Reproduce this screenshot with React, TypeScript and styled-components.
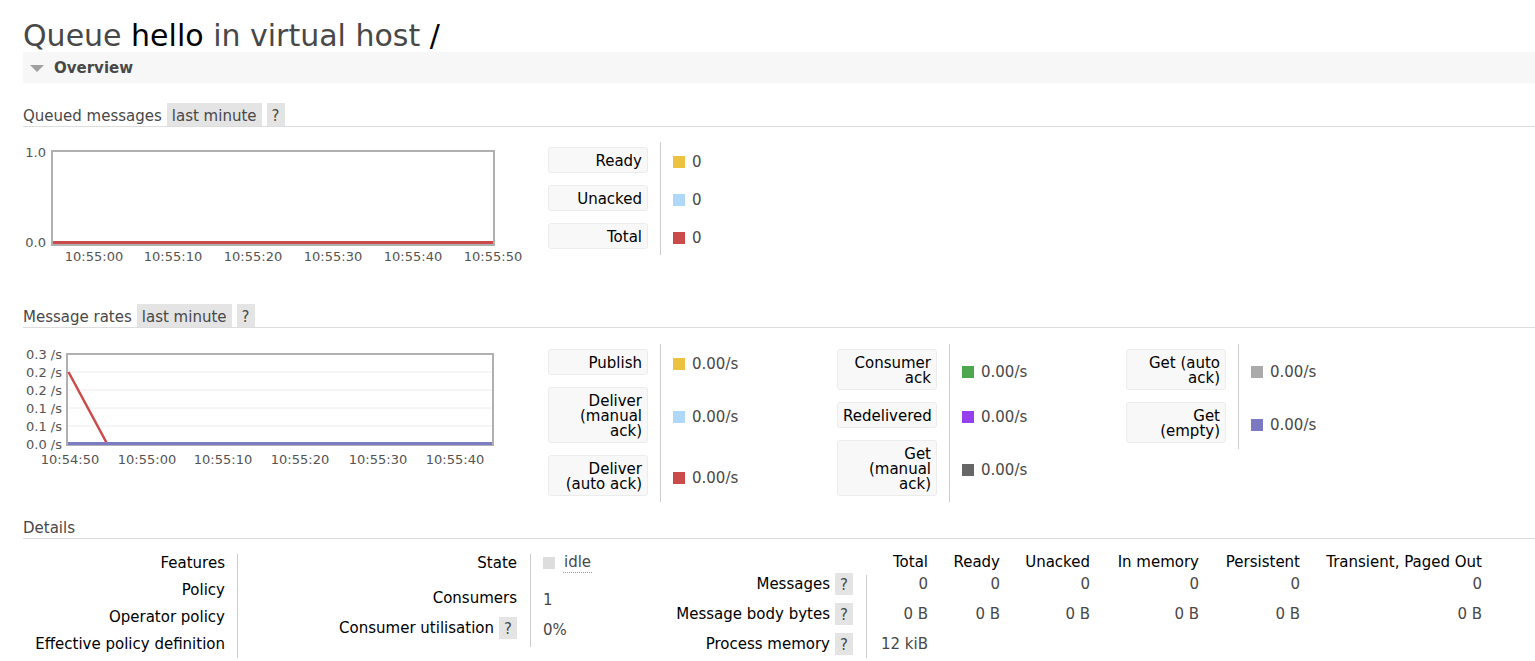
import React from "react";
import styled, { createGlobalStyle } from "styled-components";

const GlobalStyle = createGlobalStyle`
  html, body { margin: 0; padding: 0; background: #fff; }
  body {
    font-family: "DejaVu Sans", Verdana, sans-serif;
    font-size: 15px;
    color: #484848;
    overflow: hidden;
  }
  * { box-sizing: border-box; }
`;

const Page = styled.div`
  padding-left: 23px;
`;

const Title = styled.h1`
  margin: 19px 0 0;
  font-size: 30px;
  line-height: 33px;
  font-weight: normal;
  color: #484848;
  white-space: nowrap;
`;

const Name = styled.span`
  color: #000;
`;

const SectionBar = styled.div`
  display: flex;
  align-items: center;
  gap: 10px;
  height: 31px;
  padding-left: 7px;
  background: #f7f7f7;
  font-weight: bold;
  color: #484848;
`;

const Caret = styled.span`
  width: 0;
  height: 0;
  border-left: 7px solid transparent;
  border-right: 7px solid transparent;
  border-top: 7px solid #a0a0a0;
  margin-top: 1px;
`;

const Heading = styled.h2<{ $top: number }>`
  margin: ${(p) => p.$top}px 0 0;
  display: flex;
  align-items: flex-start;
  gap: 5px;
  height: 24px;
  line-height: 27px;
  border-bottom: 1px solid #ddd;
  font-size: 15px;
  font-weight: normal;
  color: #484848;
`;

const Pill = styled.span`
  display: inline-block;
  height: 23px;
  line-height: 19px;
  padding: 4px 5px 0;
  background: #e4e4e4;
  color: #484848;
`;

const Help = styled.span<{ $h: number }>`
  display: inline-block;
  width: 18px;
  height: ${(p) => p.$h}px;
  line-height: ${(p) => p.$h - 3}px;
  padding-top: 3px;
  text-align: center;
  background: #e4e4e4;
  color: #484848;
`;

const ChartRow = styled.div<{ $pad: number }>`
  display: flex;
  align-items: flex-start;
  padding-top: ${(p) => p.$pad}px;
`;

const ChartArea = styled.div`
  flex: none;
  width: 525px;
`;

const ChartSvg = styled.svg`
  display: block;
`;

const AxisText = styled.text`
  font-size: 13px;
  fill: #545454;
  font-family: "DejaVu Sans", Verdana, sans-serif;
`;

const Legend = styled.div`
  flex: none;
  display: grid;
  grid-template-columns: 100px 1px 164px;
  column-gap: 12px;
  row-gap: 12px;
  padding: 5px 0 6px;
  align-items: center;
`;

const LegendSep = styled.div<{ $n: number }>`
  grid-column: 2;
  grid-row: 1 / span ${(p) => p.$n};
  align-self: stretch;
  background: #ccc;
  margin: -5px 0 -6px;
`;

const LegendLabel = styled.div`
  grid-column: 1;
  background: #f8f8f8;
  border: 1px solid #ececec;
  border-radius: 3px;
  padding: 6px 5px 3px;
  text-align: right;
  line-height: 15px;
  color: #000;
`;

const LegendValue = styled.div`
  display: flex;
  align-items: center;
  gap: 7px;
  padding-top: 4px;
  white-space: nowrap;
`;

const Swatch = styled.span<{ $color: string }>`
  flex: none;
  width: 12px;
  height: 12px;
  background: ${(p) => p.$color};
`;

const DetailsRow = styled.div`
  display: flex;
  align-items: flex-start;
`;

const FactsGrid = styled.div<{ $cols: string; $rows: string; $pad: number }>`
  flex: none;
  display: grid;
  grid-template-columns: ${(p) => p.$cols};
  grid-template-rows: ${(p) => p.$rows};
  align-items: center;
  padding-top: ${(p) => p.$pad}px;
`;

const FactsSep = styled.div<{ $n: number; $top: number; $bottom: number }>`
  grid-column: 2;
  grid-row: 1 / span ${(p) => p.$n};
  align-self: stretch;
  background: #ccc;
  margin: ${(p) => p.$top}px 0 ${(p) => p.$bottom}px;
`;

const FactLabel = styled.div<{ $pr: number }>`
  grid-column: 1;
  display: flex;
  justify-content: flex-end;
  align-items: center;
  gap: 5px;
  padding-right: ${(p) => p.$pr}px;
  padding-top: 2px;
  color: #000;
  white-space: nowrap;
`;

const FactValue = styled.div<{ $shift?: number }>`
  grid-column: 3;
  display: flex;
  align-items: center;
  gap: 8px;
  padding-left: 12px;
  padding-top: ${(p) => p.$shift ?? 0}px;
  white-space: nowrap;
`;

const StateText = styled.span`
  border-bottom: 1px dotted #999;
  padding: 0 1px 1px;
  line-height: 17px;
`;

const NumCell = styled.div<{ $head?: boolean }>`
  text-align: right;
  white-space: nowrap;
  padding-top: 2px;
  color: ${(p) => (p.$head ? "#000" : "#484848")};
`;

type Item = { label: React.ReactNode; color: string; value: string };

function LegendGroup({ items }: { items: Item[] }) {
  return (
    <Legend>
      <LegendSep $n={items.length} />
      {items.map((it, i) => (
        <React.Fragment key={i}>
          <LegendLabel>{it.label}</LegendLabel>
          <LegendValue style={{ gridColumn: 3 }}>
            <Swatch $color={it.color} />
            {it.value}
          </LegendValue>
        </React.Fragment>
      ))}
    </Legend>
  );
}

function QueuedChart() {
  const xs = [71, 150, 230, 310, 390, 470];
  const labels = ["10:55:00", "10:55:10", "10:55:20", "10:55:30", "10:55:40", "10:55:50"];
  return (
    <ChartSvg width={525} height={128}>
      <rect x={29} y={9} width={442} height={94} fill="#fff" stroke="#b0b0b0" strokeWidth={2} />
      <line x1={30} y1={100.5} x2={470} y2={100.5} stroke="#cb4b4b" strokeWidth={3} />
      <AxisText x={23} y={15.2} textAnchor="end">1.0</AxisText>
      <AxisText x={23} y={105} textAnchor="end">0.0</AxisText>
      {xs.map((x, i) => (
        <AxisText key={i} x={x} y={119.2} textAnchor="middle">
          {labels[i]}
        </AxisText>
      ))}
    </ChartSvg>
  );
}

function RatesChart() {
  const ys = [10, 28, 46, 64, 82, 100];
  const yl = ["0.3 /s", "0.2 /s", "0.2 /s", "0.1 /s", "0.1 /s", "0.0 /s"];
  const xs = [47, 124, 200, 277, 355, 432];
  const xl = ["10:54:50", "10:55:00", "10:55:10", "10:55:20", "10:55:30", "10:55:40"];
  return (
    <ChartSvg width={525} height={130}>
      <rect x={44} y={10} width={426} height={91} fill="#fff" stroke="#b0b0b0" strokeWidth={2} />
      {[28, 46, 64, 82].map((y) => (
        <line key={y} x1={45} y1={y} x2={469} y2={y} stroke="#ececec" strokeWidth={1} />
      ))}
      <polyline points="45.5,28 84,99.5 469,99.5" fill="none" stroke="#cb4b4b" strokeWidth={2.5} />
      <line x1={45} y1={99.5} x2={469} y2={99.5} stroke="#7c7cc4" strokeWidth={3} />
      {ys.map((y, i) => (
        <AxisText key={i} x={39} y={y + 5} textAnchor="end">
          {yl[i]}
        </AxisText>
      ))}
      {xs.map((x, i) => (
        <AxisText key={i} x={x} y={119.7} textAnchor="middle">
          {xl[i]}
        </AxisText>
      ))}
    </ChartSvg>
  );
}

const queued: Item[] = [
  { label: "Ready", color: "#edc240", value: "0" },
  { label: "Unacked", color: "#afd8f8", value: "0" },
  { label: "Total", color: "#cb4b4b", value: "0" },
];

const rates1: Item[] = [
  { label: "Publish", color: "#edc240", value: "0.00/s" },
  { label: "Deliver (manual ack)", color: "#afd8f8", value: "0.00/s" },
  { label: "Deliver (auto ack)", color: "#cb4b4b", value: "0.00/s" },
];
const rates2: Item[] = [
  { label: "Consumer ack", color: "#4da74d", value: "0.00/s" },
  { label: "Redelivered", color: "#9440ed", value: "0.00/s" },
  { label: "Get (manual ack)", color: "#666666", value: "0.00/s" },
];
const rates3: Item[] = [
  { label: "Get (auto ack)", color: "#aaaaaa", value: "0.00/s" },
  { label: "Get (empty)", color: "#7c79c3", value: "0.00/s" },
];

const heads = ["Total", "Ready", "Unacked", "In memory", "Persistent", "Transient, Paged Out"];
const msgRows: { label: string; values: string[] }[] = [
  { label: "Messages", values: ["0", "0", "0", "0", "0", "0"] },
  { label: "Message body bytes", values: ["0 B", "0 B", "0 B", "0 B", "0 B", "0 B"] },
  { label: "Process memory", values: ["12 kiB"] },
];

export default function App() {
  return (
    <>
      <GlobalStyle />
      <Page>
        <Title>
          Queue <Name>hello</Name> in virtual host <Name>/</Name>
        </Title>
        <SectionBar>
          <Caret />
          Overview
        </SectionBar>

        <Heading $top={20}>
          Queued messages <Pill>last minute</Pill>
          <Help $h={23}>?</Help>
        </Heading>
        <ChartRow $pad={15}>
          <ChartArea>
            <QueuedChart />
          </ChartArea>
          <LegendGroup items={queued} />
        </ChartRow>

        <Heading $top={34}>
          Message rates <Pill>last minute</Pill>
          <Help $h={23}>?</Help>
        </Heading>
        <ChartRow $pad={16}>
          <ChartArea>
            <RatesChart />
          </ChartArea>
          <LegendGroup items={rates1} />
          <LegendGroup items={rates2} />
          <LegendGroup items={rates3} />
        </ChartRow>

        <Heading $top={13}>Details</Heading>
        <DetailsRow>
          <FactsGrid $cols="214px 1px 40px" $rows="27px 27px 27px 27px" $pad={9}>
            <FactsSep $n={4} $top={6} $bottom={-8} />
            <FactLabel $pr={12}>Features</FactLabel>
            <FactLabel $pr={12}>Policy</FactLabel>
            <FactLabel $pr={12}>Operator policy</FactLabel>
            <FactLabel $pr={12}>Effective policy definition</FactLabel>
          </FactsGrid>

          <FactsGrid $cols="252px 1px 129px" $rows="28px 42px 18px" $pad={9}>
            <FactsSep $n={3} $top={6} $bottom={-11} />
            <FactLabel $pr={13}>State</FactLabel>
            <FactValue $shift={2}>
              <Swatch $color="#dddddd" />
              <StateText>idle</StateText>
            </FactValue>
            <FactLabel $pr={13}>Consumers</FactLabel>
            <FactValue $shift={6}>1</FactValue>
            <FactLabel $pr={13}>
              Consumer utilisation <Help $h={22}>?</Help>
            </FactLabel>
            <FactValue $shift={6}>0%</FactValue>
          </FactsGrid>

          <FactsGrid
            $cols="206px 1px 61px 72px 90px 109px 101px 182px"
            $rows="14px 30px 30px 30px"
            $pad={15}
          >
            <FactsSep $n={4} $top={21} $bottom={-3} />
            <FactLabel $pr={13} />
            {heads.map((h) => (
              <NumCell key={h} $head>
                {h}
              </NumCell>
            ))}
            {msgRows.map((r) => (
              <React.Fragment key={r.label}>
                <FactLabel $pr={13}>
                  {r.label} <Help $h={22}>?</Help>
                </FactLabel>
                {r.values.map((v, i) => (
                  <NumCell key={i}>{v}</NumCell>
                ))}
              </React.Fragment>
            ))}
          </FactsGrid>
        </DetailsRow>
      </Page>
    </>
  );
}
